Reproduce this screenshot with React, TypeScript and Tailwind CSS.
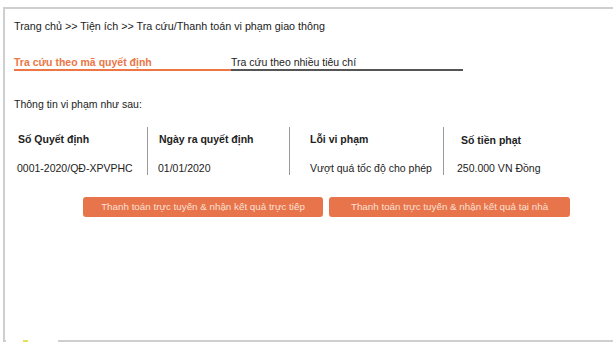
import React from "react";

const font = { fontFamily: '"Liberation Sans", Arial, sans-serif' };

export default function App() {
  return (
    <div className="w-[613px] h-[353px] bg-white text-[#222] overflow-hidden" style={font}>
      <div className="ml-[3px] mt-[7px] h-[335px] flex flex-col border-l-2 border-t-2 border-[#cfcfcf]">
        <div className="flex-1 pl-[9px] pt-[11px] text-[10.5px] leading-[12px]">
          <div className="text-[10.75px]">Trang chủ &gt;&gt; Tiện ích &gt;&gt; Tra cứu/Thanh toán vi phạm giao thông</div>
          <div className="mt-[24px] flex w-[449px]">
            <div className="w-[217px] border-b-2 border-[#ec7646] pb-[1px] font-bold text-[#ec7646]">
              Tra cứu theo mã quyết định
            </div>
            <div className="flex-1 border-b-2 border-[#555] pb-[1px]">Tra cứu theo nhiều tiêu chí</div>
          </div>
          <div className="mt-[27px]">Thông tin vi phạm như sau:</div>
          <div className="mt-[17px] flex">
            <div className="w-[134px] pl-[4px] pt-[6px] pb-[1px] border-r border-[#999]">
              <div className="font-bold">Số Quyết định</div>
              <div className="mt-[17px] -ml-[1px] whitespace-nowrap">0001-2020/QĐ-XPVPHC</div>
            </div>
            <div className="w-[142px] pl-[11px] pt-[6px] border-r border-[#999]">
              <div className="font-bold">Ngày ra quyết định</div>
              <div className="mt-[17px] -ml-[1px]">01/01/2020</div>
            </div>
            <div className="w-[154px] pl-[20px] pt-[6px] border-r border-[#999]">
              <div className="font-bold">Lỗi vi phạm</div>
              <div className="mt-[17px] whitespace-nowrap">Vượt quá tốc độ cho phép</div>
            </div>
            <div className="pl-[13px] pt-[7px]">
              <div className="font-bold pl-[4px]">Số tiền phạt</div>
              <div className="mt-[16px]">250.000 VN Đồng</div>
            </div>
          </div>
          <div className="mt-[22px] flex gap-[6px] pl-[69px] text-[9.8px]">
            <div className="w-[240px] h-[20px] rounded-[3px] bg-[#e7744a] text-[#fbe0d4] flex items-center justify-center">
              Thanh toán trực tuyến &amp; nhận kết quả trực tiếp
            </div>
            <div className="w-[241px] h-[20px] rounded-[3px] bg-[#e7744a] text-[#fbe0d4] flex items-center justify-center">
              Thanh toán trực tuyến &amp; nhận kết quả tại nhà
            </div>
          </div>
        </div>
        <div className="flex h-[2px]">
          <div className="w-[1px] bg-[#cfcfcf]" />
          <div className="w-[52px] flex pl-[17px]">
            <div className="w-[5px] h-[2px] bg-[#e5e05a]" />
          </div>
          <div className="flex-1 bg-[#cfcfcf]" />
        </div>
      </div>
    </div>
  );
}
